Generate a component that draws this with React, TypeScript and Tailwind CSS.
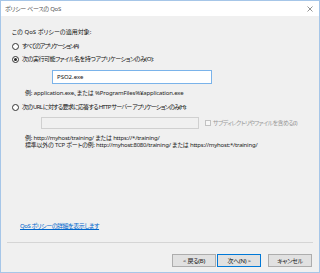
import React from "react";

const font = { fontFamily: '"Noto Sans", "Noto Sans CJK JP", sans-serif' };

function Radio({ checked }: { checked?: boolean }) {
  return (
    <span className="w-[7px] h-[7px] rounded-full border border-[#333] bg-white flex items-center justify-center shrink-0">
      {checked && <span className="w-[3px] h-[3px] rounded-full bg-[#222]" />}
    </span>
  );
}

export default function App() {
  return (
    <div
      className="w-[320px] h-[273px] border border-[#a6c6e8] bg-[#f0f0f0] flex flex-col text-[#111] text-[6px] leading-none overflow-hidden [font-feature-settings:'palt']"
      style={font}
    >
      <div className="h-[15px] bg-white flex items-center justify-between pl-[4px] pr-[5px] shrink-0">
        <span className="text-[#555] text-[6px] tracking-[-0.3px]">ポリシー ベースの QoS</span>
        <svg width="6" height="6" viewBox="0 0 6 6" className="mr-[1px]">
          <path d="M0.5 0.5 L5.5 5.5 M5.5 0.5 L0.5 5.5" stroke="#777" strokeWidth="0.8" />
        </svg>
      </div>
      <div className="flex flex-col flex-1 pl-[11px] pt-[10px]">
        <div className="h-[12px] flex items-center">この QoS ポリシーの適用対象:</div>
        <div className="h-[12px] mt-[2px] flex items-center gap-[3px]">
          <Radio />
          <span className="tracking-[-1.1px]">すべてのアプリケーション(A)</span>
        </div>
        <div className="h-[12px] mt-[1px] flex items-center gap-[3px]">
          <Radio checked />
          <span className="tracking-[-0.45px]">次の実行可能ファイル名を持つアプリケーションのみ(O):</span>
        </div>
        <div className="mt-[5px] ml-[40px] w-[160px] h-[14px] border border-[#7ab3ea] bg-white flex items-center pl-[4px]">
          PSO2.exe
        </div>
        <div className="h-[10px] mt-[4px] ml-[13px] flex items-center text-[#222] tracking-[-0.15px]">
          例: application.exe、または %ProgramFiles%¥application.exe
        </div>
        <div className="h-[12px] mt-[3px] flex items-center gap-[3px]">
          <Radio />
          <span className="tracking-[-0.75px]">次の URL に対する要求に応答する HTTP サーバー アプリケーションのみ(H):</span>
        </div>
        <div className="mt-[4px] ml-[29px] flex items-center h-[12px]">
          <div className="w-[158px] h-[12px] border border-[#d0d0d0] bg-[#f0f0f0]" />
          <span className="ml-[6px] w-[6px] h-[6px] border border-[#c2c2c2] bg-[#f7f7f7] shrink-0" />
          <span className="ml-[2px] text-[#9a9a9a] text-[6px] tracking-[-0.6px]">サブディレクトリやファイルを含める(I)</span>
        </div>
        <div className="mt-[6px] ml-[13px] text-[#222] leading-[7px] tracking-[-0.22px]">
          <div>例: http://myhost/training/ または https://*/training/</div>
          <div>標準以外の TCP ポートの例: http://myhost:8080/training/ または https://myhost:*/training/</div>
        </div>
        <div className="mt-auto ml-[8px] mb-[11px] h-[10px] flex items-center">
          <a className="text-[#0066cc] underline underline-offset-[1px] tracking-[-0.45px]">QoS ポリシーの詳細を表示します</a>
        </div>
        <div className="h-px bg-[#d5d5d5] ml-[-5px] mr-[6px]" />
        <div className="flex justify-end mt-[11px] mb-[5px] pr-[7px]">
          <button className="w-[44px] h-[13px] bg-[#e1e1e1] border border-[#adadad] flex items-center justify-center text-[6px] tracking-[-0.3px]">
            &lt; 戻る(B)
          </button>
          <button className="w-[44px] h-[13px] ml-[1px] bg-[#e1e1e1] border border-[#0078d7] flex items-center justify-center text-[6px] tracking-[-0.3px]">
            次へ(N) &gt;
          </button>
          <button className="w-[44px] h-[13px] ml-[7px] bg-[#e1e1e1] border border-[#adadad] flex items-center justify-center text-[6px] tracking-[-0.3px]">
            キャンセル
          </button>
        </div>
      </div>
    </div>
  );
}
